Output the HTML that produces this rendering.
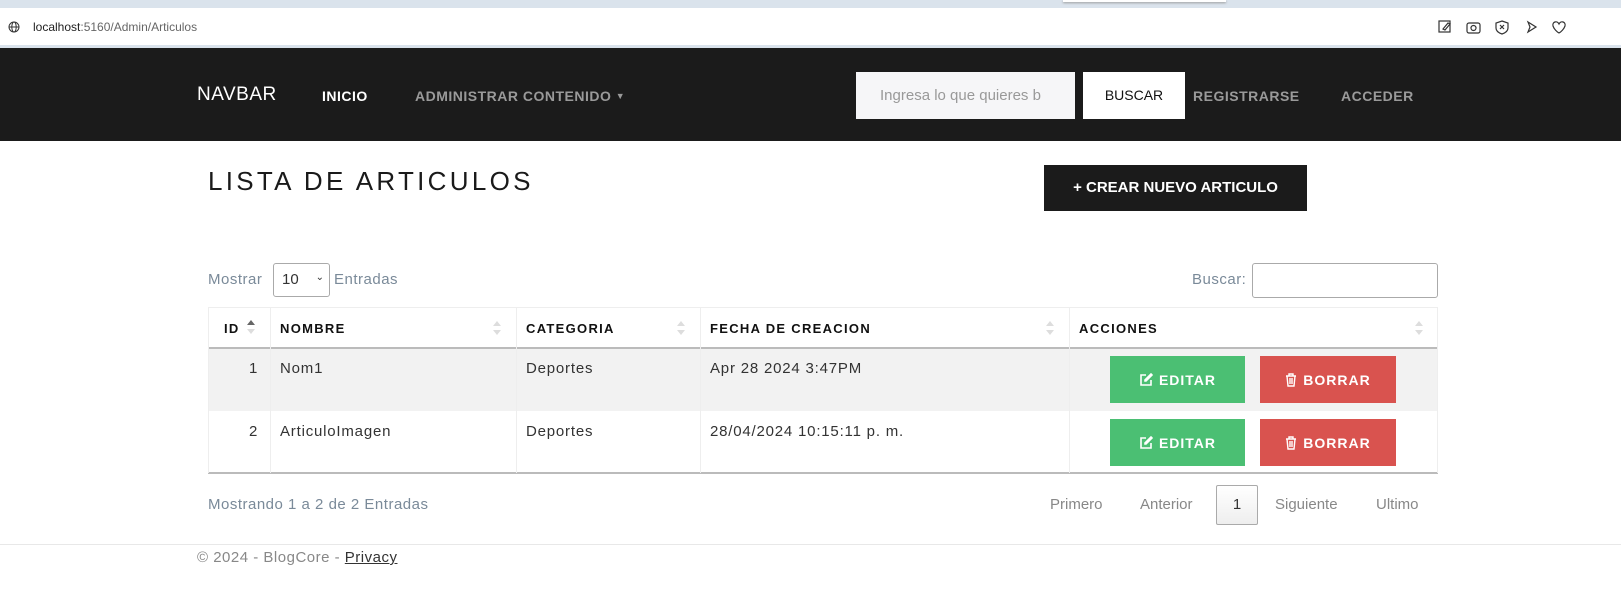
<!DOCTYPE html>
<html><head><meta charset="utf-8"><style>
*{margin:0;padding:0;box-sizing:border-box}
body{width:1621px;height:600px;position:relative;background:#fff;font-family:"Liberation Sans",sans-serif;overflow:hidden}
.a{position:absolute;white-space:nowrap}
.nav{color:#9a9a9a;font-size:14px;font-weight:bold;letter-spacing:.5px}
.th{font-size:13px;font-weight:bold;letter-spacing:1.3px;color:#111}
.td{font-size:15px;color:#333;letter-spacing:.8px}
.btn{position:absolute;color:#fff;font-size:14px;font-weight:bold;letter-spacing:1px;display:flex;align-items:center;justify-content:center;gap:6px}
.g{background:#4bbf73}.r{background:#d9534f}
.sort{position:absolute;width:8px;height:14px}
.sort:before,.sort:after{content:"";position:absolute;left:0;border-left:4px solid transparent;border-right:4px solid transparent}
.sort:before{top:0;border-bottom:5px solid #ddd}.sort:after{bottom:0;border-top:5px solid #ddd}
.sort.up:before{border-bottom-color:#666}
.pg{font-size:15px;color:#888}
</style></head><body>
<div class="a" style="left:0;top:0;width:1621px;height:8px;background:#dae3ec"></div>
<div class="a" style="left:1063px;top:0;width:163px;height:2px;background:#fff;box-shadow:0 1px 2px #999"></div>
<div class="a" style="left:0;top:8px;width:1621px;height:37px;background:#fff"></div>
<svg class="a" style="left:8px;top:21px" width="12" height="12" viewBox="0 0 12 12" fill="none" stroke="#333" stroke-width="1"><circle cx="6" cy="6" r="5"/><ellipse cx="6" cy="6" rx="2.2" ry="5"/><path d="M1 6h10"/></svg>
<div class="a" style="left:33px;top:20px;font-size:12px;color:#222">localhost<span style="color:#666">:5160/Admin/Articulos</span></div>
<svg class="a" style="left:1438px;top:19px" width="130" height="16" viewBox="0 0 130 16" fill="none" stroke="#333" stroke-width="1.2"><rect x="1" y="2" width="11" height="11"/><path d="M5 10l5-6 2 1-5 6z"/><rect x="29" y="4" width="13" height="10" rx="2"/><circle cx="35.5" cy="9" r="2.5"/><path d="M64 2l6 2v5c0 3-3 5-6 6-3-1-6-3-6-6V4z M62 6l4 4M66 6l-4 4"/><path d="M90 3l8 5-8 5 2-5z"/><path d="M121 5c2-4 7-2 6 2-1 3-4 6-6 7-2-1-5-4-6-7-1-4 4-6 6-2z"/></svg>
<div class="a" style="left:0;top:45px;width:1621px;height:3px;background:#dae3ec"></div>
<div class="a" style="left:0;top:48px;width:1621px;height:93px;background:#1b1b1b"></div>
<div class="a" style="left:197px;top:84px;font-size:19px;color:#fff;letter-spacing:.5px">NAVBAR</div>
<div class="a nav" style="left:322px;top:88px;color:#fff">INICIO</div>
<div class="a nav" style="left:415px;top:88px">ADMINISTRAR CONTENIDO <span style="font-size:9px;vertical-align:2px">▼</span></div>
<div class="a" style="left:856px;top:72px;width:219px;height:47px;background:#f6f6f8"></div>
<div class="a" style="left:880px;top:87px;font-size:15px;color:#999">Ingresa lo que quieres b</div>
<div class="a" style="left:1083px;top:72px;width:102px;height:47px;background:#fff;color:#111;font-size:14px;text-align:center;line-height:47px">BUSCAR</div>
<div class="a nav" style="left:1193px;top:88px">REGISTRARSE</div>
<div class="a nav" style="left:1341px;top:88px">ACCEDER</div>

<div class="a" style="left:208px;top:166px;font-size:26px;letter-spacing:3.3px;color:#1a1a1a">LISTA DE ARTICULOS</div>
<div class="a" style="left:1044px;top:165px;width:263px;height:46px;background:#1b1b1b;color:#fff;font-size:15px;font-weight:bold;text-align:center;line-height:46px">+ CREAR NUEVO ARTICULO</div>

<div class="a" style="left:208px;top:271px;font-size:15px;color:#7a8a99;letter-spacing:.5px">Mostrar</div>
<div class="a" style="left:273px;top:263px;width:57px;height:34px;border:1px solid #aaa;border-radius:3px;font-size:15px;color:#333;padding:7px 0 0 8px">10<span style="position:absolute;right:5px;top:8px;font-size:10px">⌄</span></div>
<div class="a" style="left:334px;top:271px;font-size:15px;color:#7a8a99;letter-spacing:.5px">Entradas</div>
<div class="a" style="left:1192px;top:271px;font-size:15px;color:#7a8a99;letter-spacing:.5px">Buscar:</div>
<div class="a" style="left:1252px;top:263px;width:186px;height:35px;border:1px solid #aaa;border-radius:3px"></div>

<div class="a" style="left:208px;top:307px;width:1230px;height:1px;background:#eee"></div>
<div class="a" style="left:208px;top:347px;width:1230px;height:2px;background:#bbb"></div>
<div class="a" style="left:208px;top:349px;width:1230px;height:62px;background:#f2f2f2"></div>
<div class="a" style="left:208px;top:472px;width:1230px;height:2px;background:#bbb"></div>
<div class="a" style="left:208px;top:307px;width:1px;height:166px;background:#eee"></div>
<div class="a" style="left:270px;top:307px;width:1px;height:166px;background:#eee"></div>
<div class="a" style="left:516px;top:307px;width:1px;height:166px;background:#eee"></div>
<div class="a" style="left:700px;top:307px;width:1px;height:166px;background:#eee"></div>
<div class="a" style="left:1069px;top:307px;width:1px;height:166px;background:#eee"></div>
<div class="a" style="left:1437px;top:307px;width:1px;height:166px;background:#eee"></div>

<div class="a th" style="left:224px;top:321px">ID</div><div class="sort up" style="left:247px;top:320px"></div>
<div class="a th" style="left:280px;top:321px">NOMBRE</div><div class="sort" style="left:493px;top:321px"></div>
<div class="a th" style="left:526px;top:321px">CATEGORIA</div><div class="sort" style="left:677px;top:321px"></div>
<div class="a th" style="left:710px;top:321px">FECHA DE CREACION</div><div class="sort" style="left:1046px;top:321px"></div>
<div class="a th" style="left:1079px;top:321px">ACCIONES</div><div class="sort" style="left:1415px;top:321px"></div>

<div class="a td" style="left:249px;top:360px">1</div>
<div class="a td" style="left:280px;top:360px">Nom1</div>
<div class="a td" style="left:526px;top:360px">Deportes</div>
<div class="a td" style="left:710px;top:360px">Apr 28 2024 3:47PM</div>
<div class="a td" style="left:249px;top:423px">2</div>
<div class="a td" style="left:280px;top:423px">ArticuloImagen</div>
<div class="a td" style="left:526px;top:423px">Deportes</div>
<div class="a td" style="left:710px;top:423px">28/04/2024 10:15:11 p. m.</div>

<div class="btn g" style="left:1110px;top:356px;width:135px;height:47px"><svg width="14" height="14" viewBox="0 0 14 14" fill="none" stroke="#fff" stroke-width="1.6"><path d="M7 2H2v10h10V7"/><path d="M6 8l1 0 6-6-1-1-6 6z"/></svg>EDITAR</div>
<div class="btn r" style="left:1260px;top:356px;width:136px;height:47px"><svg width="12" height="14" viewBox="0 0 12 14" fill="none" stroke="#fff" stroke-width="1.4"><path d="M1 3h10M4 3V1h4v2M2 3l1 10h6l1-10M5 5v6M7 5v6"/></svg>BORRAR</div>
<div class="btn g" style="left:1110px;top:419px;width:135px;height:47px"><svg width="14" height="14" viewBox="0 0 14 14" fill="none" stroke="#fff" stroke-width="1.6"><path d="M7 2H2v10h10V7"/><path d="M6 8l1 0 6-6-1-1-6 6z"/></svg>EDITAR</div>
<div class="btn r" style="left:1260px;top:419px;width:136px;height:47px"><svg width="12" height="14" viewBox="0 0 12 14" fill="none" stroke="#fff" stroke-width="1.4"><path d="M1 3h10M4 3V1h4v2M2 3l1 10h6l1-10M5 5v6M7 5v6"/></svg>BORRAR</div>

<div class="a" style="left:208px;top:496px;font-size:15px;color:#7a8a99;letter-spacing:.5px">Mostrando 1 a 2 de 2 Entradas</div>
<div class="a pg" style="left:1050px;top:496px">Primero</div>
<div class="a pg" style="left:1140px;top:496px">Anterior</div>
<div class="a" style="left:1216px;top:485px;width:42px;height:40px;border:1px solid #aaa;border-radius:2px;background:linear-gradient(#fff,#eee);font-size:15px;color:#333;text-align:center;line-height:38px">1</div>
<div class="a pg" style="left:1275px;top:496px">Siguiente</div>
<div class="a pg" style="left:1376px;top:496px">Ultimo</div>

<div class="a" style="left:0;top:544px;width:1621px;height:1px;background:#e8e8e8"></div>
<div class="a" style="left:197px;top:549px;font-size:15px;color:#888;letter-spacing:.5px">© 2024 - BlogCore - <span style="color:#333;text-decoration:underline">Privacy</span></div>
</body></html>
